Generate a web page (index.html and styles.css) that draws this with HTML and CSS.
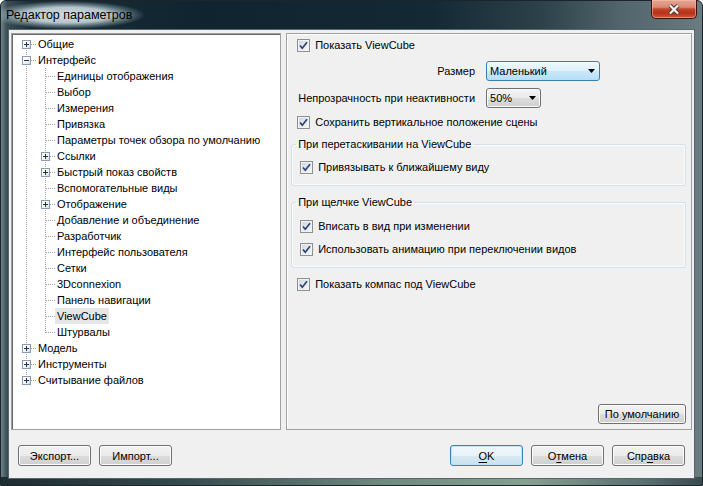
FILE: index.html
```html
<!DOCTYPE html>
<html lang="ru">
<head>
<meta charset="utf-8">
<title>Редактор параметров</title>
<link rel="stylesheet" href="styles.css">
</head>
<body>
<div class="window">
  <div class="titlebar">
    <div class="title">Редактор параметров</div>
    <div class="close">
      <svg width="14" height="11" viewBox="0 0 14 11"><path class="x-out" d="M3 1.5L11 9.5M11 1.5L3 9.5"/><path class="x-in" d="M3 1.5L11 9.5M11 1.5L3 9.5"/></svg>
    </div>
  </div>
  <div class="client">
    <div class="main">
      <div class="tree">
        <div class="row"><span class="g g-first"><span class="box plus"></span></span><span class="lbl">Общие</span></div>
        <div class="row"><span class="g g-mid"><span class="box minus"></span></span><span class="lbl">Интерфейс</span></div>
        <div class="row"><span class="g g-pass"></span><span class="g g-mid"></span><span class="lbl">Единицы отображения</span></div>
        <div class="row"><span class="g g-pass"></span><span class="g g-mid"></span><span class="lbl">Выбор</span></div>
        <div class="row"><span class="g g-pass"></span><span class="g g-mid"></span><span class="lbl">Измерения</span></div>
        <div class="row"><span class="g g-pass"></span><span class="g g-mid"></span><span class="lbl">Привязка</span></div>
        <div class="row"><span class="g g-pass"></span><span class="g g-mid"></span><span class="lbl">Параметры точек обзора по умолчанию</span></div>
        <div class="row"><span class="g g-pass"></span><span class="g g-mid"><span class="box plus"></span></span><span class="lbl">Ссылки</span></div>
        <div class="row"><span class="g g-pass"></span><span class="g g-mid"><span class="box plus"></span></span><span class="lbl">Быстрый показ свойств</span></div>
        <div class="row"><span class="g g-pass"></span><span class="g g-mid"></span><span class="lbl">Вспомогательные виды</span></div>
        <div class="row"><span class="g g-pass"></span><span class="g g-mid"><span class="box plus"></span></span><span class="lbl">Отображение</span></div>
        <div class="row"><span class="g g-pass"></span><span class="g g-mid"></span><span class="lbl">Добавление и объединение</span></div>
        <div class="row"><span class="g g-pass"></span><span class="g g-mid"></span><span class="lbl">Разработчик</span></div>
        <div class="row"><span class="g g-pass"></span><span class="g g-mid"></span><span class="lbl">Интерфейс пользователя</span></div>
        <div class="row"><span class="g g-pass"></span><span class="g g-mid"></span><span class="lbl">Сетки</span></div>
        <div class="row"><span class="g g-pass"></span><span class="g g-mid"></span><span class="lbl">3Dconnexion</span></div>
        <div class="row"><span class="g g-pass"></span><span class="g g-mid"></span><span class="lbl">Панель навигации</span></div>
        <div class="row"><span class="g g-pass"></span><span class="g g-mid"></span><span class="lbl sel">ViewCube</span></div>
        <div class="row"><span class="g g-pass"></span><span class="g g-last"></span><span class="lbl">Штурвалы</span></div>
        <div class="row"><span class="g g-mid"><span class="box plus"></span></span><span class="lbl">Модель</span></div>
        <div class="row"><span class="g g-mid"><span class="box plus"></span></span><span class="lbl">Инструменты</span></div>
        <div class="row"><span class="g g-last"><span class="box plus"></span></span><span class="lbl">Считывание файлов</span></div>
      </div>
      <div class="panel">
        <div class="check top first"><span class="cb"><svg width="11" height="11" viewBox="0 0 11 11"><path d="M2 5.5L4.3 8.2L9 2.3"/></svg></span>Показать ViewCube</div>
        <div class="opts">
          <div class="olabel">Размер</div>
          <div class="select hot size"><span>Маленький</span><svg width="7" height="4" viewBox="0 0 7 4"><polygon points="0,0 7,0 3.5,4"/></svg></div>
          <div class="olabel">Непрозрачность при неактивности</div>
          <div class="select normal opac"><span>50%</span><svg width="7" height="4" viewBox="0 0 7 4"><polygon points="0,0 7,0 3.5,4"/></svg></div>
        </div>
        <div class="check top after-opts"><span class="cb"><svg width="11" height="11" viewBox="0 0 11 11"><path d="M2 5.5L4.3 8.2L9 2.3"/></svg></span>Сохранить вертикальное положение сцены</div>
        <fieldset class="group g1">
          <legend>При перетаскивании на ViewCube</legend>
          <div class="check inner"><span class="cb"><svg width="11" height="11" viewBox="0 0 11 11"><path d="M2 5.5L4.3 8.2L9 2.3"/></svg></span>Привязывать к ближайшему виду</div>
        </fieldset>
        <fieldset class="group g2">
          <legend>При щелчке ViewCube</legend>
          <div class="check inner"><span class="cb"><svg width="11" height="11" viewBox="0 0 11 11"><path d="M2 5.5L4.3 8.2L9 2.3"/></svg></span>Вписать в вид при изменении</div>
          <div class="check inner next"><span class="cb"><svg width="11" height="11" viewBox="0 0 11 11"><path d="M2 5.5L4.3 8.2L9 2.3"/></svg></span>Использовать анимацию при переключении видов</div>
        </fieldset>
        <div class="check top compass"><span class="cb"><svg width="11" height="11" viewBox="0 0 11 11"><path d="M2 5.5L4.3 8.2L9 2.3"/></svg></span>Показать компас под ViewCube</div>
        <button class="btn defaults">По умолчанию</button>
      </div>
    </div>
    <div class="buttons">
      <button class="btn">Экспорт...</button>
      <button class="btn">Импорт...</button>
      <span class="spacer"></span>
      <button class="btn default"><u>O</u>K</button>
      <button class="btn">О<u>т</u>мена</button>
      <button class="btn">Спр<u>а</u>вка</button>
    </div>
  </div>
</div>
</body>
</html>
```

FILE: styles.css
```css
:root {
  --dotv: repeating-linear-gradient(to bottom, #a0a0a0 0 1px, transparent 1px 2px);
  --doth: repeating-linear-gradient(to right, #a0a0a0 0 1px, transparent 1px 2px);
}

html, body {
  margin: 0;
  padding: 0;
  background: #ffffff;
}

body {
  width: 703px;
  height: 486px;
  overflow: hidden;
  font-family: "Liberation Sans", Arial, sans-serif;
  font-size: 11px;
  color: #000;
}

.window {
  width: 703px;
  height: 486px;
  box-sizing: border-box;
  border: 1px solid #1a262c;
  border-radius: 6px 6px 0 0;
  display: flex;
  flex-direction: column;
  background:
    linear-gradient(to right, #1e2c33 0%, #34484d 25%, #6f8a7e 55%, #86a090 75%, #5a6e70 92%, #3a4a50 100%) left bottom / 100% 8px no-repeat,
    linear-gradient(to right, #6f8188 0px, #3a4d55 6px, #1b2f39 30px, #10242f 200px, #132934 430px, #2c4149 540px, #52656c 620px, #6a7b81 703px);
}

.titlebar {
  height: 29px;
  display: flex;
  align-items: flex-start;
  justify-content: space-between;
  background: radial-gradient(ellipse 78px 14px at 66px 14px, rgba(214, 225, 229, 0.97) 0%, rgba(200, 214, 219, 0.9) 55%, rgba(160, 182, 190, 0.45) 80%, rgba(120, 150, 160, 0) 100%);
}

.title {
  margin: 6px 0 0 5px;
  font-size: 12.5px;
  line-height: 16px;
  color: #000;
}

.close {
  width: 46px;
  height: 19px;
  margin-right: 5px;
  margin-top: -1px;
  box-sizing: border-box;
  border: 1px solid #3b1209;
  border-top: none;
  border-radius: 0 0 5px 5px;
  background: linear-gradient(#e3a896 0%, #d88a73 40%, #c4452a 50%, #b6301a 72%, #d2583c 100%);
  box-shadow: inset 0 0 0 1px rgba(255, 190, 170, 0.55);
  display: flex;
  align-items: center;
  justify-content: center;
}

.x-out {
  stroke: #4a3a36;
  stroke-width: 4.2;
  fill: none;
}

.x-in {
  stroke: #f4f4f4;
  stroke-width: 2.2;
  fill: none;
}

.client {
  margin: 0 8px;
  height: 448px;
  background: #f0f0f0;
  display: flex;
  flex-direction: column;
  box-shadow: 0 0 0 1px #56676c;
}

.main {
  display: flex;
  gap: 5px;
  margin-top: 3px;
  padding: 0 2px;
  height: 397px;
}

.tree {
  width: 271px;
  box-sizing: border-box;
  background: #fff;
  border: 1px solid #a0a0a0;
  box-shadow: inset 1px 1px 0 #696969;
  padding: 2px 0 0 5px;
}

.row {
  display: flex;
  height: 16px;
}

.g {
  width: 19px;
  height: 16px;
  flex: none;
  display: flex;
  align-items: flex-start;
}

.g-pass {
  background: var(--dotv) 9px 0 / 1px 16px no-repeat;
}

.g-mid {
  background:
    var(--doth) 10px 8px / 9px 1px no-repeat,
    var(--dotv) 9px 0 / 1px 16px no-repeat;
}

.g-first {
  background:
    var(--doth) 10px 8px / 9px 1px no-repeat,
    var(--dotv) 9px 8px / 1px 8px no-repeat;
}

.g-last {
  background:
    var(--doth) 10px 8px / 9px 1px no-repeat,
    var(--dotv) 9px 0 / 1px 9px no-repeat;
}

.box {
  width: 9px;
  height: 9px;
  box-sizing: border-box;
  margin: 4px 0 0 5px;
  border: 1px solid #8a9bb1;
}

.box.plus {
  background:
    linear-gradient(#1f3352, #1f3352) center / 5px 1px no-repeat,
    linear-gradient(#1f3352, #1f3352) center / 1px 5px no-repeat,
    linear-gradient(135deg, #ffffff 30%, #d6dbe2);
}

.box.minus {
  background:
    linear-gradient(#1f3352, #1f3352) center / 5px 1px no-repeat,
    linear-gradient(135deg, #ffffff 30%, #d6dbe2);
}

.lbl {
  line-height: 16px;
  padding: 0 2px;
  white-space: nowrap;
}

.lbl.sel {
  background: #e6e6e6;
}

.panel {
  width: 407px;
  box-sizing: border-box;
  border: 1px solid #a0a0a0;
  box-shadow: inset 1px 1px 0 #ffffff;
  display: flex;
  flex-direction: column;
  padding: 0 5px 5px 4px;
}

.check {
  display: flex;
  align-items: center;
  gap: 5px;
  height: 16px;
  white-space: nowrap;
}

.check.top {
  padding-left: 6px;
}

.check.first {
  margin-top: 3px;
}

.check.after-opts {
  margin-top: 6px;
}

.check.compass {
  margin-top: 8px;
}

.check.inner {
  padding-left: 4px;
}

.check.next {
  margin-top: 7px;
}

.cb {
  width: 13px;
  height: 13px;
  box-sizing: border-box;
  border: 1px solid #8e8f8f;
  background: linear-gradient(135deg, #cdd4db 0%, #e4e8ec 50%, #f8f9fa 100%);
  box-shadow: inset 0 0 0 1px #f0f2f4;
  display: flex;
  flex: none;
}

.cb path {
  fill: none;
  stroke: #2a4275;
  stroke-width: 1.7;
}

.opts {
  display: grid;
  grid-template-columns: auto auto;
  justify-content: start;
  column-gap: 11px;
  row-gap: 7px;
  margin-top: 8px;
  padding-left: 7px;
}

.olabel {
  justify-self: end;
  align-self: center;
  white-space: nowrap;
}

.select {
  display: flex;
  align-items: center;
  justify-content: space-between;
  box-sizing: border-box;
  height: 20px;
  border: 1px solid #707070;
  border-radius: 3px;
  padding: 0 4px 0 3px;
}

.select svg polygon {
  fill: #000;
}

.select.size {
  width: 114px;
}

.select.opac {
  width: 55px;
}

.select.hot {
  border-color: #3c7fb1;
  background: linear-gradient(#eef8fd 0%, #dcf0fb 50%, #c9e8f8 51%, #b8def4 100%);
}

.select.normal {
  background: linear-gradient(#f2f2f2 0%, #ebebeb 50%, #dddddd 51%, #cfcfcf 100%);
  box-shadow: inset 0 0 0 1px #fafafa;
}

.group {
  margin: 0;
  border: 1px solid #d5dfe5;
  border-radius: 3px;
  padding: 8px 4px 10px 4px;
  box-shadow: inset 0 0 0 1px #fbfcfd;
}

.group legend {
  padding: 0 2px;
  line-height: 14px;
  color: #000;
}

.g1 {
  margin-top: 7px;
}

.g2 {
  margin-top: 9px;
  padding-top: 9px;
}

.btn {
  box-sizing: border-box;
  width: 73px;
  height: 21px;
  padding: 0;
  font-family: inherit;
  font-size: 11px;
  color: #000;
  border: 1px solid #707070;
  border-radius: 3px;
  background: linear-gradient(#f2f2f2 0%, #ebebeb 50%, #dddddd 51%, #cfcfcf 100%);
  box-shadow: inset 0 0 0 1px #fcfcfc;
}

.btn u {
  text-decoration: underline;
  text-underline-offset: 2px;
}

.btn.default {
  border-color: #3c7fb1;
  background: linear-gradient(#f1f8fc 0%, #e7f2f9 50%, #d7e9f4 51%, #cbe1ef 100%);
  box-shadow: inset 0 0 0 1px #bfe6f8;
}

.btn.defaults {
  width: 88px;
  height: 20px;
  margin-top: auto;
  align-self: flex-end;
}

.buttons {
  display: flex;
  gap: 8px;
  margin-top: 15px;
  padding: 0 9px;
}

.spacer {
  flex: 1;
}
```
